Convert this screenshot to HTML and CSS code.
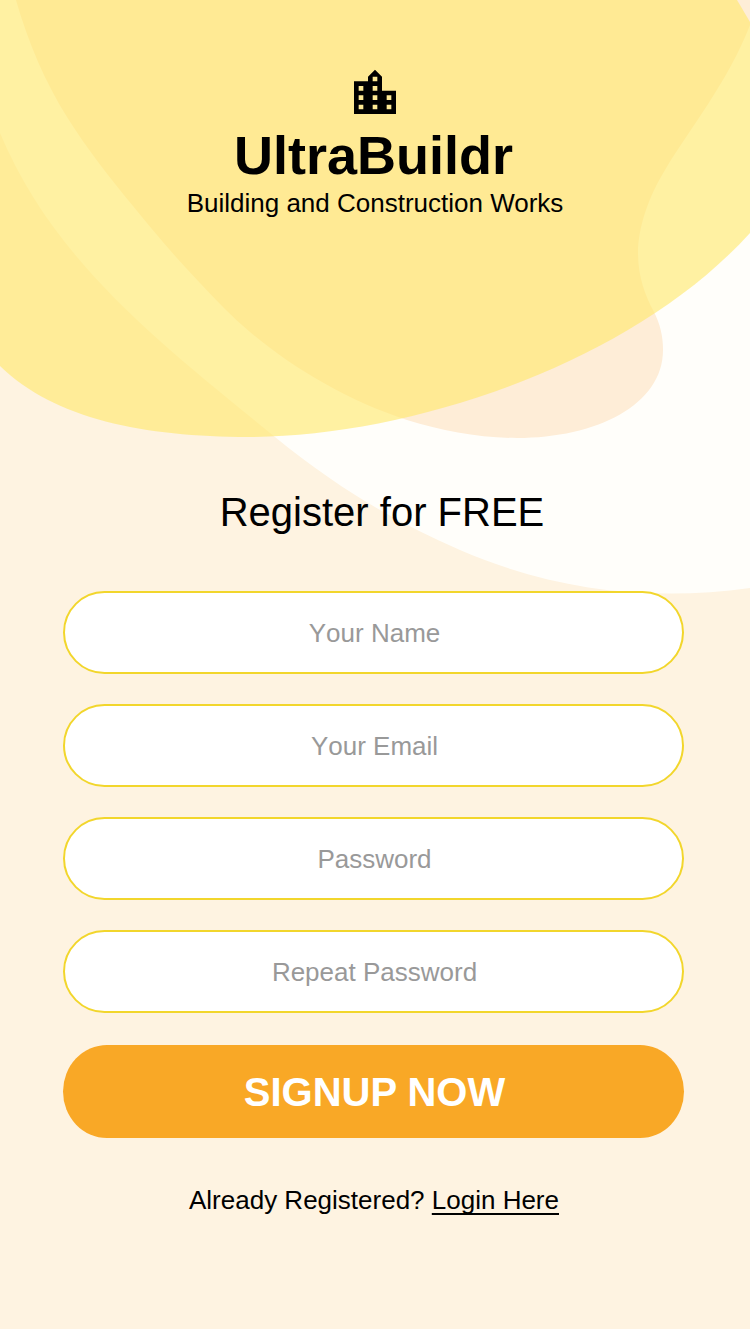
FILE: index.html
```html
<!DOCTYPE html>
<html lang="en">
<head>
<meta charset="utf-8">
<title>UltraBuildr</title>
<link rel="stylesheet" href="styles.css">
</head>
<body>
<main class="screen">
  <svg class="backdrop" viewBox="0 0 750 600" aria-hidden="true">
    <path class="blob-white" d="M0 0V133C54 262 160 343 275 437C340 490 398 523 460 550C552 590 650 602 750 588V0Z"/>
    <path class="blob-peach" d="M16 0C28 42 45 82 67 117C87 149 110 178 133 206C154 232 176 258 200 283C216 300 232 317 250 332C291 367 348 401 407 420C443 431 479 438 517 438C596 438 663 405 663 350C663 336 660 324 654 312C645 295 638 277 638 253C638 227 649 196 665 170C690 128 728 82 750 25V0Z"/>
    <path class="blob-yellow" d="M0 0V366C54 419 145 437 248 437C408 437 630 365 750 233V22L737 0Z"/>
  </svg>
  <header class="brand">
    <svg class="logo" viewBox="0 0 24 24" aria-hidden="true">
      <path d="M15 11V5l-3-3-3 3v2H3v14h18V11h-6zm-8 8H5v-2h2v2zm0-4H5v-2h2v2zm0-4H5V9h2v2zm6 8h-2v-2h2v2zm0-4h-2v-2h2v2zm0-4h-2V9h2v2zm0-4h-2V5h2v2zm6 12h-2v-2h2v2zm0-4h-2v-2h2v2z"/>
    </svg>
    <h1 class="name">UltraBuildr</h1>
    <p class="tagline">Building and Construction Works</p>
  </header>
  <h2 class="heading">Register for FREE</h2>
  <form class="form">
    <input class="field" type="text" placeholder="Your Name">
    <input class="field" type="email" placeholder="Your Email">
    <input class="field" type="password" placeholder="Password">
    <input class="field" type="password" placeholder="Repeat Password">
    <button class="submit" type="button">SIGNUP NOW</button>
  </form>
  <p class="login">Already Registered? <a class="link" href="#">Login Here</a></p>
</main>
</body>
</html>
```
FILE: styles.css
```css
* { box-sizing: border-box; }

body {
  margin: 0;
  font-family: "Liberation Sans", Arial, sans-serif;
  color: #000;
}

.screen {
  position: relative;
  isolation: isolate;
  display: flex;
  flex-direction: column;
  align-items: center;
  width: 750px;
  height: 1329px;
  padding-top: 65px;
  overflow: hidden;
  background: #fef3e1;
}

.backdrop {
  position: absolute;
  top: 0;
  left: 0;
  z-index: -1;
  width: 750px;
  height: 600px;
}

.blob-white { fill: #fffefa; }
.blob-peach { fill: #feedd7; }
.blob-yellow { fill: #ffe767; fill-opacity: 0.6; }

.brand {
  display: flex;
  flex-direction: column;
  align-items: center;
  height: 153px;
}

.logo {
  width: 56px;
  height: 56px;
}

.name {
  margin: 4px 3px 0 0;
  font-size: 54px;
  line-height: 60px;
}

.tagline {
  margin: 3px 0 0;
  font-size: 26px;
  line-height: 30px;
  white-space: nowrap;
}

.heading {
  margin: 271px 0 0 14px;
  font-size: 40px;
  font-weight: 400;
  line-height: 46px;
}

.form {
  display: flex;
  flex-direction: column;
  gap: 30px;
  width: 621px;
  margin: 56px 3px 0 0;
}

.field {
  height: 83px;
  padding: 2px 0 0 2px;
  border: 2px solid #f2d62c;
  border-radius: 42px;
  background: #fff;
  font: 26px "Liberation Sans", Arial, sans-serif;
  font-kerning: none;
  text-align: center;
}

.field::placeholder { color: #999; opacity: 1; }

.submit {
  height: 93px;
  margin-top: 2px;
  padding: 1px 0 0 2px;
  border: 0;
  border-radius: 44px / 46.5px;
  background: #f9a826;
  color: #fff;
  font: bold 40px/46px "Liberation Sans", Arial, sans-serif;
}

.login {
  margin: 47px 2px 0 0;
  font-size: 26px;
  line-height: 30px;
}

.link {
  color: inherit;
  text-decoration: underline;
  text-decoration-thickness: 2px;
  text-underline-offset: 4px;
  text-decoration-skip-ink: none;
}
```
